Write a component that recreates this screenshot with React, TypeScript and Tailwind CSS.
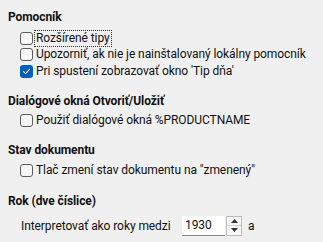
import React from "react";

function Box({ checked }: { checked?: boolean }) {
  if (checked) {
    return (
      <span className="w-[13px] h-[13px] rounded-[3px] bg-[#005fb8] flex items-center justify-center shrink-0">
        <svg width="9" height="9" viewBox="0 0 9 9">
          <path d="M1.6 4.7 L3.6 6.7 L7.5 2.4" stroke="white" strokeWidth="1.1" fill="none" strokeLinecap="round" strokeLinejoin="round" />
        </svg>
      </span>
    );
  }
  return <span className="w-[13px] h-[13px] rounded-[3px] border border-[#5c5c5c] bg-[#f6f6f6] shrink-0" />;
}

function Row({ label, checked, focus }: { label: string; checked?: boolean; focus?: boolean }) {
  return (
    <div className="flex items-center h-[16.5px] pl-[20px] whitespace-nowrap">
      <Box checked={checked} />
      <span
        className={
          "ml-[2px] px-[1px] leading-[15px] " +
          (focus ? "outline outline-1 outline-dotted outline-[#333]" : "")
        }
      >
        {label}
      </span>
    </div>
  );
}

function Heading({ children }: { children: React.ReactNode }) {
  return (
    <div className="font-bold pl-[8px] h-[16px] leading-[16px] whitespace-nowrap">{children}</div>
  );
}

export default function App() {
  return (
    <div
      className="w-[323px] h-[242px] bg-[#f0f0f0] text-[#111] text-[12px] tracking-[-0.08px] overflow-hidden pt-[9px]"
      style={{ fontFamily: 'Roboto, sans-serif' }}
    >
      <Heading>Pomocník</Heading>
      <div className="mt-[5px] flex flex-col">
        <Row label="Rozšírené tipy" focus />
        <Row label="Upozorniť, ak nie je nainštalovaný lokálny pomocník" />
        <Row label="Pri spustení zobrazovať okno 'Tip dňa'" checked />
      </div>
      <div className="mt-[13px]">
        <Heading>Dialógové okná Otvoriť/Uložiť</Heading>
      </div>
      <div className="mt-[4px]">
        <Row label="Použiť dialógové okná %PRODUCTNAME" />
      </div>
      <div className="mt-[13px]">
        <Heading>Stav dokumentu</Heading>
      </div>
      <div className="mt-[4px]">
        <Row label={'Tlač zmení stav dokumentu na "zmenený"'} />
      </div>
      <div className="mt-[14px]">
        <Heading>Rok (dve číslice)</Heading>
      </div>
      <div className="mt-[6px] flex items-center pl-[21px] h-[22px] whitespace-nowrap">
        <span className="w-[161px] shrink-0">Interpretovať ako roky medzi</span>
        <div className="flex items-center">
          <div className="w-[43px] h-[20px] bg-white border-b border-[#8a8a8a] flex items-center pl-[3px]">
            1930
          </div>
          <div className="ml-[1px] w-[16px] h-[20px] flex flex-col border border-[#bcbcbc] bg-[#f7f7f7]">
            <div className="flex-1 flex items-center justify-center border-b border-[#cfcfcf]">
              <svg width="7" height="4" viewBox="0 0 7 4">
                <path d="M0 4 L3.5 0 L7 4 Z" fill="#333" />
              </svg>
            </div>
            <div className="flex-1 flex items-center justify-center">
              <svg width="7" height="4" viewBox="0 0 7 4">
                <path d="M0 0 L3.5 4 L7 0 Z" fill="#333" />
              </svg>
            </div>
          </div>
          <span className="ml-[6px]">a</span>
        </div>
      </div>
    </div>
  );
}
